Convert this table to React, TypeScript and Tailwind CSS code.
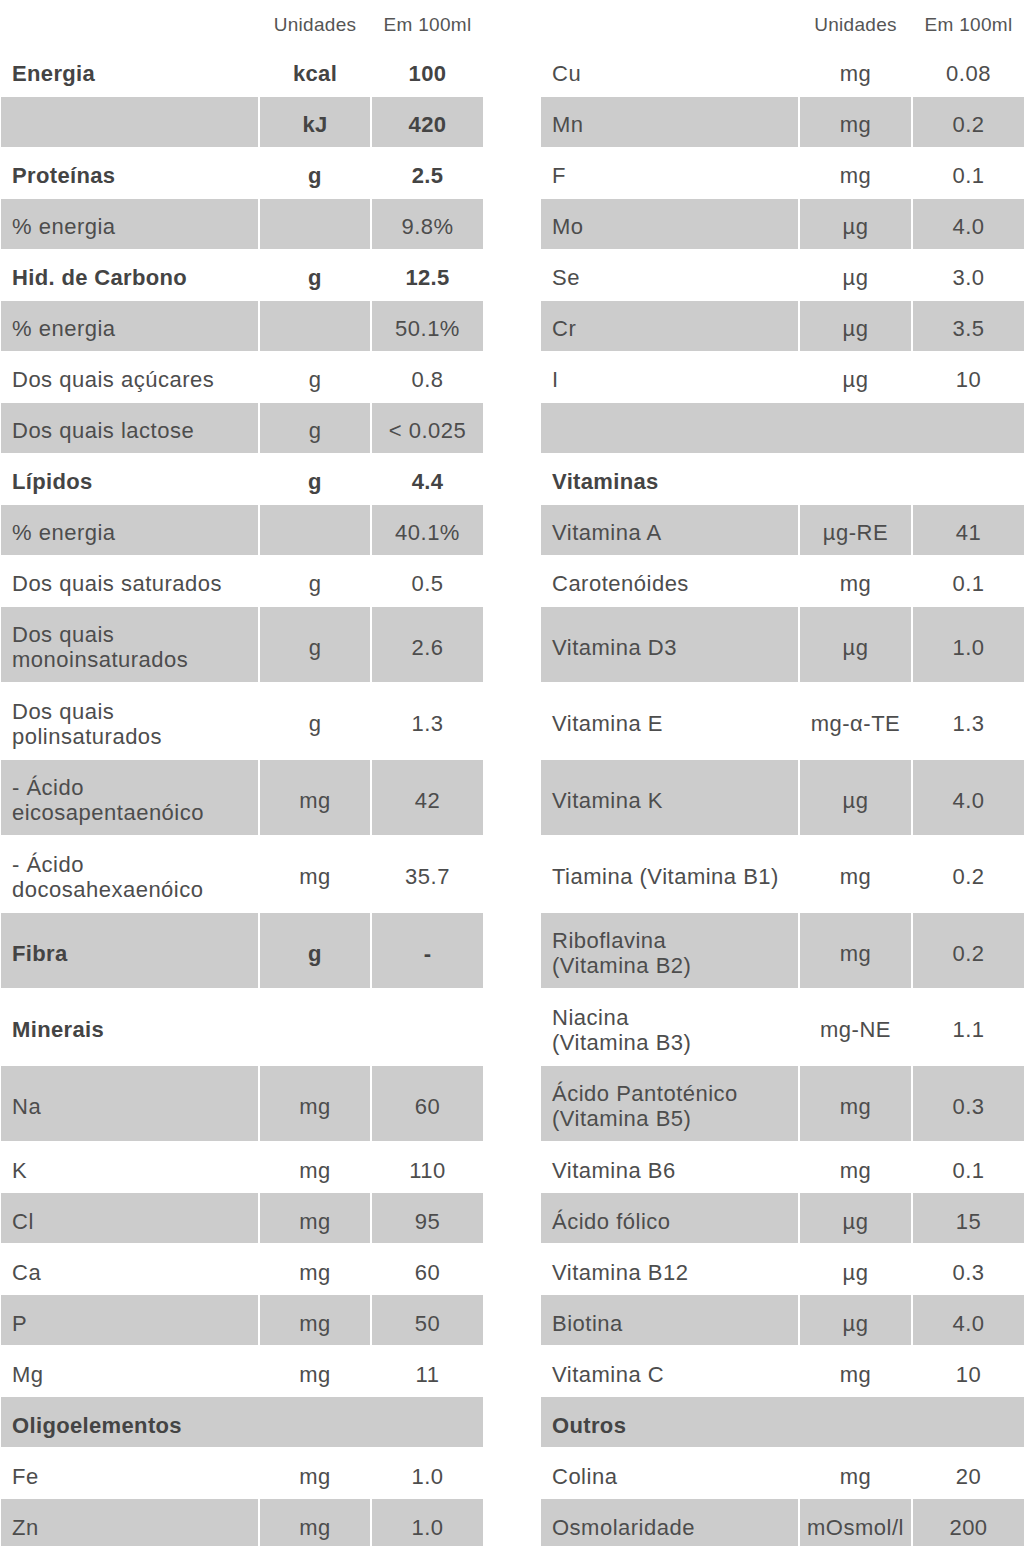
import React from "react";

type Row = {
  label?: React.ReactNode;
  unit?: string;
  value?: string;
  grey?: boolean;
  tall?: boolean;
  bold?: boolean;
  span?: boolean;
};

const left: Row[] = [
  { label: "Energia", unit: "kcal", value: "100", bold: true },
  { label: "", unit: "kJ", value: "420", bold: true, grey: true },
  { label: "Proteínas", unit: "g", value: "2.5", bold: true },
  { label: "% energia", unit: "", value: "9.8%", grey: true },
  { label: "Hid. de Carbono", unit: "g", value: "12.5", bold: true },
  { label: "% energia", unit: "", value: "50.1%", grey: true },
  { label: "Dos quais açúcares", unit: "g", value: "0.8" },
  { label: "Dos quais lactose", unit: "g", value: "< 0.025", grey: true },
  { label: "Lípidos", unit: "g", value: "4.4", bold: true },
  { label: "% energia", unit: "", value: "40.1%", grey: true },
  { label: "Dos quais saturados", unit: "g", value: "0.5" },
  { label: <>Dos quais<br />monoinsaturados</>, unit: "g", value: "2.6", grey: true, tall: true },
  { label: <>Dos quais<br />polinsaturados</>, unit: "g", value: "1.3", tall: true },
  { label: <>- Ácido<br />eicosapentaenóico</>, unit: "mg", value: "42", grey: true, tall: true },
  { label: <>- Ácido<br />docosahexaenóico</>, unit: "mg", value: "35.7", tall: true },
  { label: "Fibra", unit: "g", value: "-", grey: true, tall: true, bold: true },
  { label: "Minerais", span: true, tall: true, bold: true },
  { label: "Na", unit: "mg", value: "60", grey: true, tall: true },
  { label: "K", unit: "mg", value: "110" },
  { label: "Cl", unit: "mg", value: "95", grey: true },
  { label: "Ca", unit: "mg", value: "60" },
  { label: "P", unit: "mg", value: "50", grey: true },
  { label: "Mg", unit: "mg", value: "11" },
  { label: "Oligoelementos", span: true, grey: true, bold: true },
  { label: "Fe", unit: "mg", value: "1.0" },
  { label: "Zn", unit: "mg", value: "1.0", grey: true },
];

const right: Row[] = [
  { label: "Cu", unit: "mg", value: "0.08" },
  { label: "Mn", unit: "mg", value: "0.2", grey: true },
  { label: "F", unit: "mg", value: "0.1" },
  { label: "Mo", unit: "µg", value: "4.0", grey: true },
  { label: "Se", unit: "µg", value: "3.0" },
  { label: "Cr", unit: "µg", value: "3.5", grey: true },
  { label: "I", unit: "µg", value: "10" },
  { label: "", span: true, grey: true },
  { label: "Vitaminas", span: true, bold: true },
  { label: "Vitamina A", unit: "µg-RE", value: "41", grey: true },
  { label: "Carotenóides", unit: "mg", value: "0.1" },
  { label: "Vitamina D3", unit: "µg", value: "1.0", grey: true, tall: true },
  { label: "Vitamina E", unit: "mg-α-TE", value: "1.3", tall: true },
  { label: "Vitamina K", unit: "µg", value: "4.0", grey: true, tall: true },
  { label: "Tiamina (Vitamina B1)", unit: "mg", value: "0.2", tall: true },
  { label: <>Riboflavina<br />(Vitamina B2)</>, unit: "mg", value: "0.2", grey: true, tall: true },
  { label: <>Niacina<br />(Vitamina B3)</>, unit: "mg-NE", value: "1.1", tall: true },
  { label: <>Ácido Pantoténico<br />(Vitamina B5)</>, unit: "mg", value: "0.3", grey: true, tall: true },
  { label: "Vitamina B6", unit: "mg", value: "0.1" },
  { label: "Ácido fólico", unit: "µg", value: "15", grey: true },
  { label: "Vitamina B12", unit: "µg", value: "0.3" },
  { label: "Biotina", unit: "µg", value: "4.0", grey: true },
  { label: "Vitamina C", unit: "mg", value: "10" },
  { label: "Outros", span: true, grey: true, bold: true },
  { label: "Colina", unit: "mg", value: "20" },
  { label: "Osmolaridade", unit: "mOsmol/l", value: "200", grey: true },
];

function Table({ rows, unitW, valW }: { rows: Row[]; unitW: string; valW: string }) {
  return (
    <div className="flex flex-col">
      <div className="flex h-[45px] items-center pt-[4px] text-[19px] tracking-[0.3px] text-[#555555]">
        <div className="w-[257px] shrink-0" />
        <div className={`${unitW} ml-[2px] shrink-0 text-center`}>Unidades</div>
        <div className={`${valW} ml-[2px] shrink-0 text-center`}>Em 100ml</div>
      </div>
      {rows.map((r, i) => {
        const h = r.tall ? "h-[76.5px]" : "h-[51px]";
        const bg = r.grey ? "bg-[#cccccc]" : "";
        const weight = r.bold
          ? "font-bold text-[#444444] tracking-[0.35px]"
          : "font-normal text-[#4d4d4d] tracking-[0.5px]";
        if (r.span) {
          return (
            <div key={i} className={`flex ${h} py-[0.5px]`}>
              <div className={`flex flex-1 items-center pl-[11px] pt-[6px] ${bg} ${weight}`}>{r.label}</div>
            </div>
          );
        }
        return (
          <div key={i} className={`flex ${h} py-[0.5px] ${weight}`}>
            <div className={`flex w-[257px] shrink-0 items-center whitespace-nowrap pl-[11px] pt-[6px] ${bg}`}>
              <span>{r.label}</span>
            </div>
            <div className={`ml-[2px] flex ${unitW} shrink-0 items-center justify-center whitespace-nowrap pt-[6px] ${bg}`}>
              {r.unit}
            </div>
            <div className={`ml-[2px] flex ${valW} shrink-0 items-center justify-center whitespace-nowrap pt-[6px] ${bg}`}>
              {r.value}
            </div>
          </div>
        );
      })}
    </div>
  );
}

export default function App() {
  return (
    <div
      className="flex h-[1546px] w-[1024px] overflow-hidden bg-white text-[22px] leading-[25px]"
      style={{ fontFamily: '"Liberation Sans", Arial, Helvetica, sans-serif' }}
    >
      <div className="ml-[1px] w-[482px] shrink-0">
        <Table rows={left} unitW="w-[110px]" valW="w-[111px]" />
      </div>
      <div className="ml-[58px] w-[483px] shrink-0">
        <Table rows={right} unitW="w-[111px]" valW="w-[111px]" />
      </div>
    </div>
  );
}
